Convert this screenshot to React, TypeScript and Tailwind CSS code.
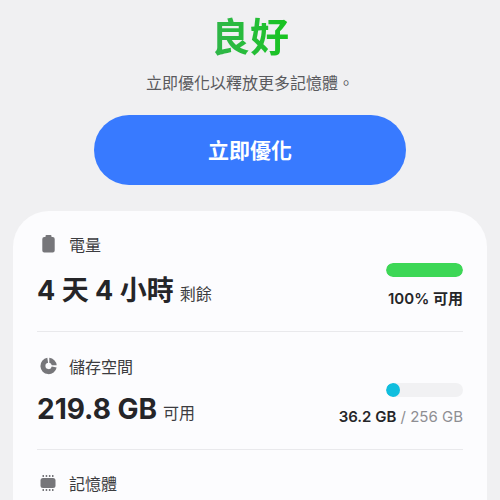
import React from 'react';

interface StatRowProps {
  icon: React.ReactNode;
  label: string;
  className?: string;
  children?: React.ReactNode;
  aside?: React.ReactNode;
}

const BatteryIcon = () => (
  <svg viewBox="0 1 20 20" className="w-5 h-5" fill="#76767a" aria-hidden="true">
    <path d="M7.500 1h4a1 1 0 0 1 1 1v1h1.200a2 2 0 0 1 2 2v11.500a2 2 0 0 1-2 2H5.300a2 2 0 0 1-2-2V5a2 2 0 0 1 2-2h1.200V2a1 1 0 0 1 1-1Z" />
  </svg>
);

const StorageIcon = () => (
  <svg viewBox="0 1 20 20" className="w-5 h-5" aria-hidden="true">
    <path d="M8.700 4.300A5.700 5.700 0 1 0 15.200 11" fill="none" stroke="#76767a" strokeWidth="5" />
    <path d="M10.300 1.800A8.200 8.200 0 0 1 17.700 9.200H12.800A3.500 3.500 0 0 0 10.300 6.800Z" fill="#76767a" />
  </svg>
);

const MemoryIcon = () => (
  <svg viewBox="0 1 20 20" className="w-5 h-5" fill="#76767a" aria-hidden="true">
    <rect x="1.500" y="5" width="15" height="10" rx="2.500" />
    <path d="M3.500 2H5v2H3.500zM6.700 2h1.500v2H6.700zM9.900 2h1.500v2H9.900zM13 2h1.500v2H13zM3.500 16H5v2H3.500zM6.700 16h1.500v2H6.700zM9.900 16h1.500v2H9.900zM13 16h1.500v2H13z" />
  </svg>
);

const UsageBar: React.FC<{ percent: number; color: string; label: string }> = ({ percent, color, label }) => (
  <div
    role="meter"
    aria-label={label}
    aria-valuenow={percent}
    aria-valuemin={0}
    aria-valuemax={100}
    className="w-[77px] h-3.5 rounded-full bg-[#f1f1f3] overflow-hidden"
  >
    <div className={`h-full min-w-3.5 rounded-full ${color}`} style={{ width: `${percent}%` }} />
  </div>
);

const StatRow: React.FC<StatRowProps> = ({ icon, label, className = '', children, aside }) => (
  <section className={`flex items-end justify-between ${className}`}>
    <div>
      <h2 className="flex items-center gap-2.5 h-6 pl-0.5 text-base leading-6 text-[#3c3c40]">
        {icon}
        {label}
      </h2>
      {children}
    </div>
    {aside && <div className="flex flex-col items-end text-[15px] leading-5">{aside}</div>}
  </section>
);

export default function App() {
  return (
    <main
      lang="zh-Hant"
      className="h-screen overflow-hidden flex flex-col bg-[#f0f0f2] font-[Inter,'Noto_Sans_CJK_TC',sans-serif] text-[#252528]"
    >
      <header className="flex flex-col items-center pt-[11px]">
        <h1 className="text-[39px] leading-[52px] font-bold bg-linear-to-r from-[#30b54a] to-[#16c41c] bg-clip-text text-transparent">
          良好
        </h1>
        <p className="mt-2 text-base leading-6 text-[#5a5a5e]">立即優化以釋放更多記憶體。</p>
        <button
          type="button"
          className="mt-5 pt-0.5 w-5/8 h-[70px] rounded-full bg-[#387aff] text-[21px] leading-8 font-bold text-white"
        >
          立即優化
        </button>
      </header>

      <div className="flex-1 mt-[26px] mx-[13px] px-6 rounded-t-[36px] bg-[#fcfcfe]">
        <StatRow
          icon={<BatteryIcon />}
          label="電量"
          className="pt-[22px] pb-[22px] border-b border-[#e9e9ec]"
          aside={
            <>
              <UsageBar percent={100} color="bg-[#3dd756]" label="電量" />
              <p className="mt-3 font-semibold">100% 可用</p>
            </>
          }
        >
          <p className="mt-4 text-[27px] leading-9 font-bold">
            4 天 4 小時<span className="ml-1.5 text-base font-normal text-[#3c3c40]">剩餘</span>
          </p>
        </StatRow>

        <StatRow
          icon={<StorageIcon />}
          label="儲存空間"
          className="pt-[23px] pb-[22px] border-b border-[#e9e9ec]"
          aside={
            <>
              <UsageBar percent={14} color="bg-[#10bede]" label="儲存空間" />
              <p className="mt-2.5 text-[#8e8e93]">
                <span className="font-semibold text-[#252528]">36.2 GB</span> / 256 GB
              </p>
            </>
          }
        >
          <p className="mt-3 text-[28px] leading-9 font-bold">
            219.8 GB<span className="ml-1.5 text-base font-normal text-[#3c3c40]">可用</span>
          </p>
        </StatRow>

        <StatRow icon={<MemoryIcon />} label="記憶體" className="pt-[22px] pb-6" />
      </div>
    </main>
  );
}
